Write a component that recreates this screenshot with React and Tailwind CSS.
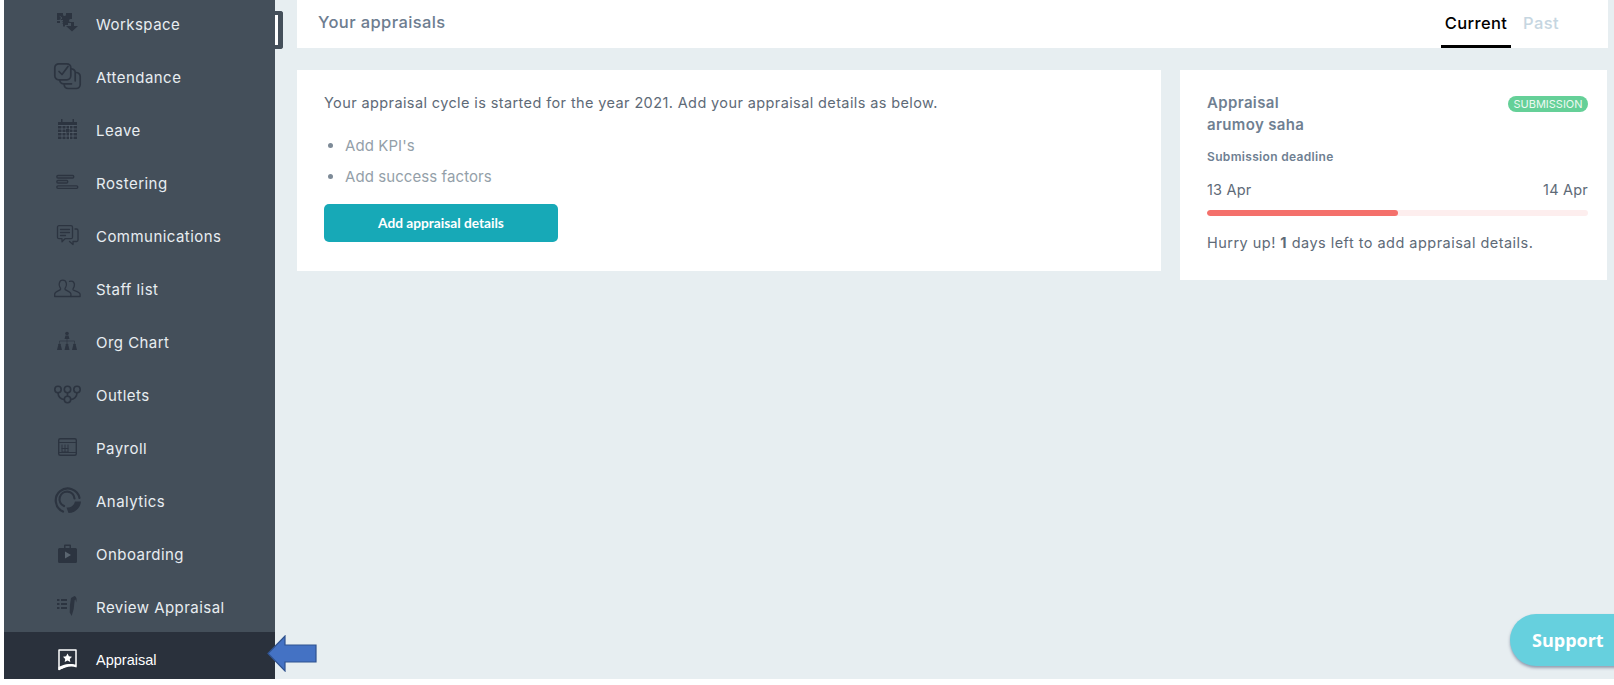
const ic = "#2c3440";
const S = ({ children, c = ic }) => (
  <svg width="32" height="32" viewBox="0 0 32 32" fill="none" stroke={c} strokeWidth="1.5" strokeLinecap="round" strokeLinejoin="round" className="shrink-0">
    {children}
  </svg>
);
const icons = {
  Workspace: (
    <S>
      <path fill={ic} stroke="none" d="M5 5h6v1.500a1.500 1.500 0 0 0 3 0V5h6v6h-1.500a1.500 1.500 0 0 0 0 3h.5v1h-3v2h-3v1.500H11V16H9.500a1.500 1.500 0 0 0 0-3H11v-1H5z" />
      <path fill={ic} stroke="none" d="M5 13h3v2H5zM19 14h3v4h4l-6 5.500-6-5.500h5z" />
      <path stroke="#444f5a" strokeWidth="1" d="M8 8.500l2 1.500-2 1.500" />
    </S>
  ),
  Attendance: (
    <S>
      <rect x="2.800" y="2.800" width="16" height="16" rx="4" strokeWidth="1.700" />
      <path d="M7 10.500l3 3 6-8" strokeWidth="1.700" />
      <path d="M19.500 7.800a4 4 0 0 1 3.700 4v8M7.800 19a4 4 0 0 0 3.700 3.800h8" strokeWidth="1.700" />
      <path d="M24 11.500a4 4 0 0 1 4.200 4v8a4 4 0 0 1-4 4h-8a4 4 0 0 1-4-3.700" strokeWidth="1.700" />
    </S>
  ),
  Leave: (
    <S>
      <path fill={ic} stroke="none" d="M6 8h3V5h1.500v3h10V5H22v3h3v17H6z" />
      <path stroke="#4c5763" strokeWidth="1" d="M6.500 11.500h18" />
      <path stroke="#5a6570" strokeWidth="0.700" d="M6.500 15h18M6.500 18.500h18M6.500 22h18M10 12v13M14 12v13M17.500 12v13M21 12v13" />
      <rect x="14" y="15" width="3.500" height="3.500" fill={ic} stroke="none" />
    </S>
  ),
  Rostering: (
    <S>
      <rect x="4.800" y="8.500" width="17" height="2.500" rx="1.250" strokeWidth="1.300" />
      <rect x="4.800" y="13.500" width="11" height="2.500" rx="1.250" strokeWidth="1.300" />
      <rect x="4.800" y="18.800" width="21" height="2.500" rx="1.250" strokeWidth="1.300" />
    </S>
  ),
  Communications: (
    <S>
      <path strokeWidth="1.300" d="M7 5.700h12a1.500 1.500 0 0 1 1.500 1.500v10a1.500 1.500 0 0 1-1.500 1.500H13l-3 3v-3H7a1.500 1.500 0 0 1-1.500-1.500v-10A1.500 1.500 0 0 1 7 5.700z" />
      <path strokeWidth="1.300" d="M8.500 9.500h9M8.500 12.500h9M8.500 15.500h5" />
      <path strokeWidth="1.300" d="M23 9h1.500a1.500 1.500 0 0 1 1.500 1.500v9.500a1.500 1.500 0 0 1-1.500 1.500H21v3l-3.500-3" />
    </S>
  ),
  "Staff list": (
    <S>
      <path strokeWidth="1.300" d="M2.700 23.500v-2.500c0-2.500 5-3.500 5.800-4.500.5-.8-.1-1.600-.7-2.500-1-1.500-1.300-6.800 3-6.800s4 5.300 3 6.800c-.6.900-1.200 1.700-.7 2.500.8 1 5.800 2 5.800 4.500v2.500z" />
      <path strokeWidth="1.300" d="M17.500 8.300c4-1 5.500 1.800 4.700 5-.4 1.500-1.700 2.500-1.100 3.500.7 1 7 1.700 7 4.700v2h-9" />
    </S>
  ),
  "Org Chart": (
    <S>
      <g fill={ic} stroke="none">
        <circle cx="15" cy="7.500" r="1.800" />
        <path d="M12.500 13l1-3.500h3l1 3.500z" />
        <circle cx="7.500" cy="19" r="1.500" />
        <path d="M5 24l1-4h3l1 4z" />
        <circle cx="15" cy="19" r="1.500" />
        <path d="M12.500 24l1-4h3l1 4z" />
        <circle cx="22.500" cy="19" r="1.500" />
        <path d="M20 24l1-4h3l1 4z" />
      </g>
      <path strokeWidth="0.600" d="M15 13v4M7.500 17v-2h15v2" />
    </S>
  ),
  Outlets: (
    <S>
      <circle cx="6" cy="10.500" r="3.200" strokeWidth="1.600" />
      <circle cx="15.500" cy="10.500" r="3.200" strokeWidth="1.600" />
      <circle cx="25" cy="10.500" r="3.200" strokeWidth="1.600" />
      <circle cx="15.500" cy="20.500" r="3.200" strokeWidth="1.600" />
      <path strokeWidth="1.600" d="M6 13.700c0 4 3 6.800 6.300 6.800M25 13.700c0 4-3 6.800-6.300 6.800M15.500 13.700v3.600" />
    </S>
  ),
  Payroll: (
    <S>
      <rect x="6.700" y="6.700" width="17.600" height="16.600" rx="1.500" strokeWidth="1.400" />
      <path strokeWidth="1" d="M7 10.500h17M10 13v7h6M10 16.500h6M13 13v7M16 13v7M7 20.500h17" />
    </S>
  ),
  Analytics: (
    <S>
      <path strokeWidth="2.200" d="M11 26.500A12 12 0 1 1 27.500 13" />
      <path strokeWidth="2.200" d="M12 21A7.500 7.500 0 1 1 22.500 13.500" />
      <path fill={ic} stroke="none" d="M14.500 22.500a7.500 7.500 0 0 0 8.500-6h6c-.5 6.500-6 11.500-12.500 11.500z" />
    </S>
  ),
  Onboarding: (
    <S>
      <path fill={ic} stroke="none" d="M12 10V7.500A1 1 0 0 1 13 6.500h5a1 1 0 0 1 1 1V10h4.500A1.500 1.500 0 0 1 25 11.500v12a1.500 1.500 0 0 1-1.500 1.500h-16A1.500 1.500 0 0 1 6 23.500v-12A1.500 1.500 0 0 1 7.500 10zM13.500 8v2h4V8z" />
      <path fill="#5a6570" stroke="none" d="M13 13.500l6 3.500-6 3.500z" />
    </S>
  ),
  "Review Appraisal": (
    <S>
      <g fill={ic} stroke="none">
        <rect x="5" y="8" width="2.500" height="2" />
        <rect x="9" y="8" width="6" height="2" />
        <rect x="5" y="12" width="2.500" height="2" />
        <rect x="9" y="12" width="6" height="2" />
        <rect x="5" y="16" width="2.500" height="2" />
        <rect x="9" y="16" width="6" height="2" />
        <path d="M19 7l3.500-2c2 .5 2.700 3 1.700 6.500l-.7-3-.8.5-1 9-2 7-2-3.500.2-7z" />
      </g>
    </S>
  ),
  Appraisal: (
    <S c="#ffffff">
      <path stroke="#ffffff" strokeWidth="1.500" d="M7 6h17v16c-5-3-10 0-17 3.500z" />
      <path fill="#ffffff" stroke="none" d="M6.500 26l0-3c5-2.500 11-5 18-1v1.500c-6-2.500-11 0-18 2.500z" />
      <path fill="#ffffff" stroke="none" d="M15.500 9.500l1.400 2.800 3.100.4-2.200 2.200.5 3.100-2.800-1.500-2.800 1.500.5-3.100-2.200-2.200 3.100-.4z" />
    </S>
  ),
};
const items = Object.keys(icons);

export default function App() {
  return (
    <div className="relative flex h-[685px] w-full overflow-hidden bg-white pb-[6px] pl-[4px] font-['Inter','Liberation_Sans',sans-serif]">
      <aside className="flex w-[271px] shrink-0 flex-col overflow-hidden bg-[#444f5a]">
        <div className="-mt-[4px] flex flex-col">
          {items.map((name) => {
            const active = name === "Appraisal";
            return (
              <div
                key={name}
                className={
                  active
                    ? "flex h-[53px] shrink-0 items-center gap-[12px] bg-[#2a313c] pl-[48px] pt-[3px] font-['Liberation_Sans',sans-serif] text-[14.500px] text-white"
                    : "flex h-[53px] shrink-0 items-center gap-[12px] pl-[48px] pt-[3px] text-[15px] tracking-[0.46px] text-[#e8edf1]"
                }
              >
                {icons[name]}
                <span className="pt-[2px]">{name}</span>
              </div>
            );
          })}
        </div>
      </aside>
      <main className="flex min-w-0 flex-1 flex-col gap-[22px] bg-[#e7eef1] pl-[22px]">
        <header className="mr-[6px] flex h-[48px] shrink-0 items-center justify-between bg-white pl-[21px] pr-[49px]">
          <span className="-mt-[4px] text-[16.500px] font-medium tracking-[0.4px] text-[#6d7d90]">Your appraisals</span>
          <nav className="flex h-full items-stretch gap-[12px]">
            <span className="flex w-[70px] items-center justify-center border-b-[3px] border-black pt-[1px] text-[16.500px] font-medium tracking-[0.4px] text-black">Current</span>
            <span className="-mt-[2px] flex items-center text-[16.500px] font-medium tracking-[0.4px] text-[#c6d6e1]">Past</span>
          </nav>
        </header>
        <div className="flex items-start gap-[19px] pr-[7px]">
          <section className="h-[201px] flex-1 bg-white pl-[27px] pt-[23px]">
            <p className="text-[14.500px] leading-[20px] tracking-[0.39px] text-[#5e6a77]">
              Your appraisal cycle is started for the year 2021. Add your appraisal details as below.
            </p>
            <ul className="mt-[23px] flex list-disc flex-col gap-[11px] pl-[21px] text-[15px] leading-[20px] tracking-[0.08px] text-[#949fa9] marker:text-[#7d8a97]">
              <li>Add KPI's</li>
              <li>Add success factors</li>
            </ul>
            <button className="mt-[17px] h-[38px] w-[234px] rounded-[5px] bg-[#17a9b7] font-['Lato',sans-serif] text-[13.700px] font-bold text-white">
              Add appraisal details
            </button>
          </section>
          <section className="h-[210px] w-[427px] shrink-0 bg-white pl-[27px] pr-[19px] pt-[21px]">
            <div className="flex items-start justify-between">
              <div className="text-[15px] font-semibold leading-[22px] tracking-[0.36px] text-[#6f7f92]">
                <div className="pt-[1px]">Appraisal</div>
                <div>arumoy saha</div>
              </div>
              <span className="mt-[5px] flex h-[16px] w-[80px] items-center justify-center rounded-full bg-[#65d098] text-[11px] tracking-[0px] text-[#eef9f3]">SUBMISSION</span>
            </div>
            <div className="mt-[12px] text-[12px] font-semibold leading-[18px] tracking-[0.33px] text-[#6f7f92]">Submission deadline</div>
            <div className="mt-[14px] flex justify-between text-[14.500px] leading-[20px] tracking-[0.2px] text-[#5e6a77]">
              <span>13 Apr</span>
              <span>14 Apr</span>
            </div>
            <div className="mt-[10px] h-[6px] w-full overflow-hidden rounded-full bg-[#fdeeee]">
              <div className="h-full w-1/2 rounded-full bg-[#f4706b]" />
            </div>
            <p className="mt-[17px] text-[14.500px] leading-[20px] tracking-[0.47px] text-[#5e6a77]">
              Hurry up! <b className="font-bold">1</b> days left to add appraisal details.
            </p>
          </section>
        </div>
      </main>
      <div className="absolute left-[275px] top-[11px] h-[38px] w-[8px] rounded-r-[3px] border-y-[4px] border-r-[5px] border-[#444f5a] bg-white" />
      <svg className="absolute left-[267px] top-[635px]" width="50" height="37" viewBox="0 0 50 37">
        <path d="M1 18.500L18 1v9h31v17H18v9z" fill="#4472c4" stroke="#2f528f" strokeWidth="1.200" />
      </svg>
      <div className="absolute left-[1510px] top-[614px] flex h-[52px] w-[130px] items-center rounded-full bg-[#66d0de] pl-[22px] font-['Open_Sans',sans-serif] text-[18px] font-bold text-white shadow-[0_2px_3px_rgba(80,90,120,0.55)]">
        Support
      </div>
    </div>
  );
}
